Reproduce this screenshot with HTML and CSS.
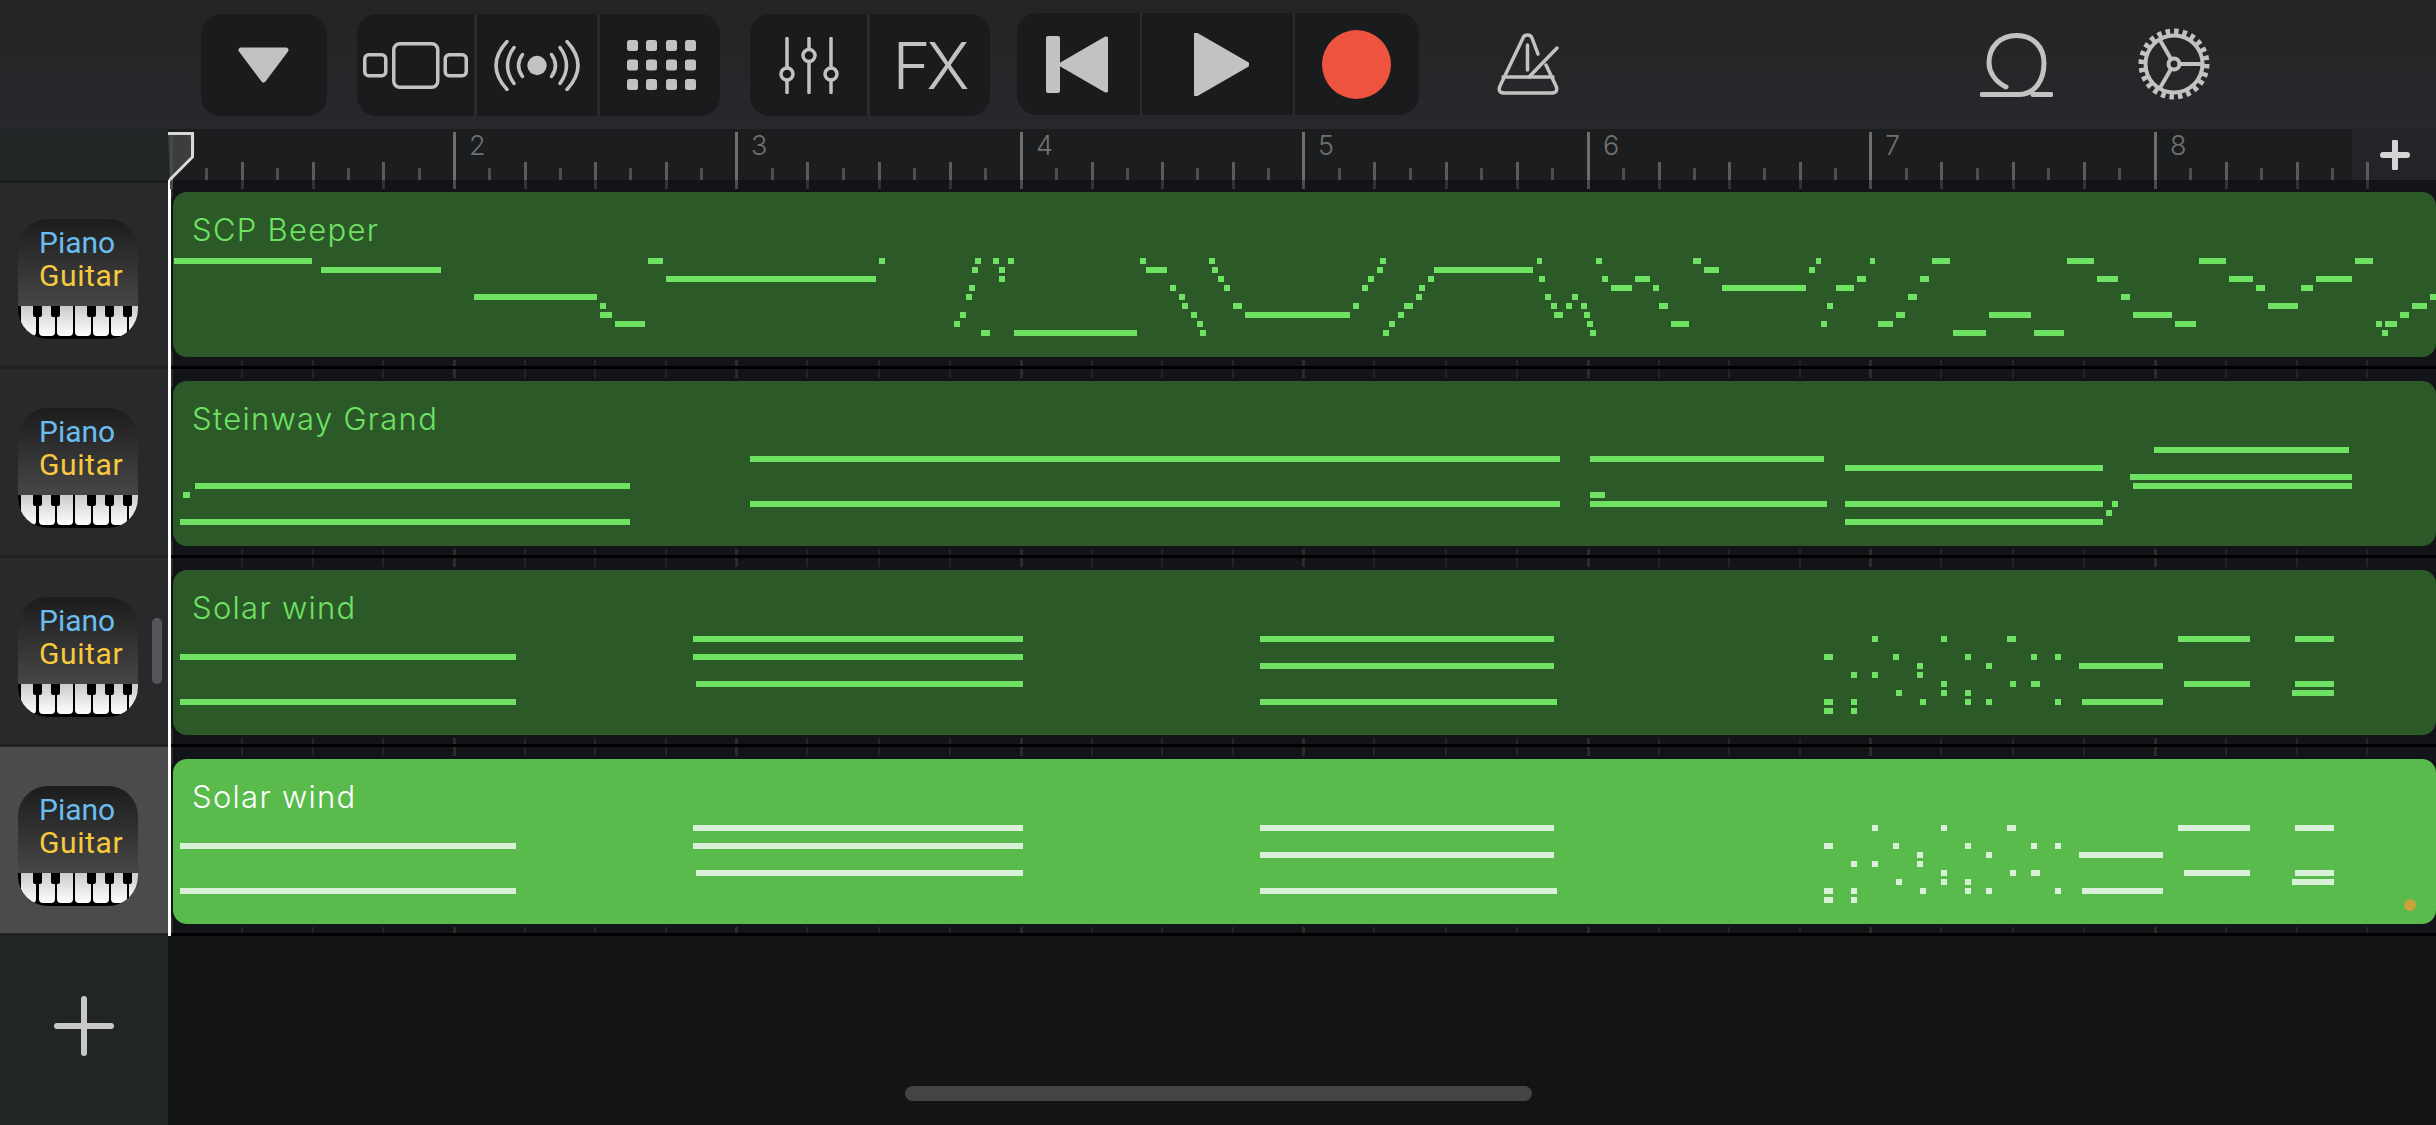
FILE: index.html
```html
<!DOCTYPE html>
<html>
    <head>
        <meta charset="utf-8" />
        <title>Tracks</title>
        <link rel="stylesheet" href="styles.css">
    </head>
    <body>
        <svg class="defs" width="0" height="0">
            <defs>
                <linearGradient id="keyShade" x1="0" y1="0" x2="0" y2="1">
                    <stop offset="0" stop-color="#cbcbcb" />
                    <stop offset="1" stop-color="#ffffff" />
                </linearGradient>
                <symbol id="keys" viewBox="0 0 120 33">
                    <rect width="120" height="33" fill="#000" />
                    <g fill="url(#keyShade)">
                        <path d="M3 0H18V26Q18 30 14 30H7Q3 30 3 26Z" />
                        <path d="M21 0H37V26Q37 30 33 30H25Q21 30 21 26Z" />
                        <path d="M39 0H55V26Q55 30 51 30H43Q39 30 39 26Z" />
                        <path d="M57 0H73V26Q73 30 69 30H61Q57 30 57 26Z" />
                        <path d="M75 0H91V26Q91 30 87 30H79Q75 30 75 26Z" />
                        <path d="M93 0H109V26Q109 30 105 30H97Q93 30 93 26Z" />
                        <path d="M111 0H120V30H111Z" />
                    </g>
                    <g fill="#000">
                        <path d="M15 0H24V9Q24 11 22 11H17Q15 11 15 9Z" />
                        <path d="M33 0H42V9Q42 11 40 11H35Q33 11 33 9Z" />
                        <path d="M69 0H78V9Q78 11 76 11H71Q69 11 69 9Z" />
                        <path d="M87 0H96V9Q96 11 94 11H89Q87 11 87 9Z" />
                        <path d="M105 0H114V9Q114 11 112 11H107Q105 11 105 9Z" />
                    </g>
                </symbol>
            </defs>
        </svg>

        <div class="app">
            <div class="toolbar">
                <div class="group group-view">
                    <div class="cell cell-view">
                        <svg class="icon" width="51" height="36" viewBox="0 0 51 36">
                            <path class="solid" d="M3 3H48L25.5 33Z" />
                        </svg>
                    </div>
                </div>

                <div class="group group-modes">
                    <div class="cell cell-a">
                        <svg class="icon" width="105" height="47" viewBox="0 0 105 47">
                            <g class="line">
                                <rect x="1.75" y="12.75" width="21" height="21" rx="4" />
                                <rect x="30.75" y="1.75" width="44" height="43.5" rx="6" />
                                <rect x="82.25" y="12.75" width="21" height="21" rx="4" />
                            </g>
                        </svg>
                    </div>
                    <div class="cell cell-b">
                        <svg class="icon" width="86" height="51" viewBox="0 0 86 51">
                            <circle class="fill" cx="43" cy="25.5" r="9.7" />
                            <g class="line">
                                <path d="M28.500 14.500Q20.500 25.500 28.500 36.500" />
                                <path d="M57.500 14.500Q65.500 25.500 57.500 36.500" />
                                <path d="M20 7.500Q7 25.500 20 43.500" />
                                <path d="M66 7.500Q79 25.500 66 43.500" />
                                <path d="M13 1.500Q-9 25.500 13 49.500" />
                                <path d="M73 1.500Q95 25.500 73 49.500" />
                            </g>
                        </svg>
                    </div>
                    <div class="cell cell-c">
                        <svg class="icon icon-grid" width="69" height="50" viewBox="0 0 69 50">
                            <g class="fill">
                                <rect x="0" y="0" width="11" height="11" rx="2.5" />
                                <rect x="19" y="0" width="11" height="11" rx="2.5" />
                                <rect x="39" y="0" width="11" height="11" rx="2.5" />
                                <rect x="58" y="0" width="11" height="11" rx="2.5" />
                                <rect x="0" y="19.5" width="11" height="11" rx="2.5" />
                                <rect x="19" y="19.5" width="11" height="11" rx="2.5" />
                                <rect x="39" y="19.5" width="11" height="11" rx="2.5" />
                                <rect x="58" y="19.5" width="11" height="11" rx="2.5" />
                                <rect x="0" y="39" width="11" height="11" rx="2.5" />
                                <rect x="19" y="39" width="11" height="11" rx="2.5" />
                                <rect x="39" y="39" width="11" height="11" rx="2.5" />
                                <rect x="58" y="39" width="11" height="11" rx="2.5" />
                            </g>
                        </svg>
                    </div>
                </div>

                <div class="group group-mix">
                    <div class="cell cell-a">
                        <svg class="icon" width="60" height="57" viewBox="0 0 60 57">
                            <g class="line">
                                <path d="M8 1.5V31M8 43V55.5" />
                                <path d="M30 1.5V12.5M30 24.500V55.5" />
                                <path d="M52 1.5V31M52 43V55.5" />
                                <circle cx="8" cy="37" r="6" />
                                <circle cx="30" cy="18.5" r="6" />
                                <circle cx="52" cy="37" r="6" />
                            </g>
                        </svg>
                    </div>
                    <div class="cell cell-c"><span class="fx">FX</span></div>
                </div>

                <div class="group group-transport">
                    <div class="cell cell-back">
                        <svg class="icon" width="62" height="57" viewBox="0 0 62 57">
                            <rect class="fill" x="0" y="0" width="14" height="57" rx="2" />
                            <path class="solid" d="M16 28.5L60 3V54Z" />
                        </svg>
                    </div>
                    <div class="cell cell-play">
                        <svg class="icon" width="55" height="63" viewBox="0 0 55 63">
                            <path class="solid" d="M2 2L53 31.5L2 61Z" />
                        </svg>
                    </div>
                    <div class="cell cell-rec"><span class="rec-dot"></span></div>
                </div>

                <svg class="icon tool-metronome" width="62" height="62" viewBox="0 0 62 62">
                    <g class="line">
                        <path d="M41 21L35 5C33.5 1 27.5 1 26 5L3 53C1 58 3 60 8 60H54C59 60 61 58 59 53L49 32" />
                        <path d="M6 44H56" />
                        <path d="M30.5 12V37" />
                        <path d="M32 44L60 15" />
                    </g>
                </svg>

                <svg class="icon tool-loop" width="73" height="64" viewBox="0 0 73 64">
                    <g class="line line-thick">
                        <path d="M26 54C14 48 9 38 9 30C9 13 21 2.5 36.500 2.500C52 2.500 64 13 64 30C64 46 56 61.500 38 61.500H2" />
                        <path d="M53 61.500H71" />
                    </g>
                </svg>

                <svg class="icon tool-gear" width="72" height="72" viewBox="0 0 72 72">
                    <g class="line">
                        <circle cx="36" cy="36" r="28.500" />
                        <circle cx="36" cy="36" r="5.500" />
                        <path d="M41.500 36H64.500M33 31L22 12M33 41L22 60" />
                    </g>
                    <circle class="teeth" cx="36" cy="36" r="32.500" />
                </svg>
            </div>

            <div class="head">
                <div class="corner"></div>
                <div class="ruler">
                    <svg id="rulerMarks" class="ruler-marks" width="2184" height="60"></svg>
                    <svg class="playhead-cap" width="27" height="49" viewBox="0 0 27 49">
                        <path d="M0 1.500H24.500V25L1.500 48" />
                    </svg>
                </div>
                <div class="ruler-add">
                    <svg width="30" height="30" viewBox="0 0 30 30">
                        <path d="M15 2V28M3 15H27" />
                    </svg>
                </div>
            </div>

            <div class="main">
                <div class="tracks">
                    <div class="track">
                        <div class="inst">
                            <span class="inst-piano">Piano</span>
                            <span class="inst-guitar">Guitar</span>
                            <svg class="inst-keys" width="120" height="33"><use href="#keys" /></svg>
                        </div>
                    </div>
                    <div class="track">
                        <div class="inst">
                            <span class="inst-piano">Piano</span>
                            <span class="inst-guitar">Guitar</span>
                            <svg class="inst-keys" width="120" height="33"><use href="#keys" /></svg>
                        </div>
                    </div>
                    <div class="track">
                        <div class="inst">
                            <span class="inst-piano">Piano</span>
                            <span class="inst-guitar">Guitar</span>
                            <svg class="inst-keys" width="120" height="33"><use href="#keys" /></svg>
                        </div>
                    </div>
                    <div class="track track-on">
                        <div class="inst">
                            <span class="inst-piano">Piano</span>
                            <span class="inst-guitar">Guitar</span>
                            <svg class="inst-keys" width="120" height="33"><use href="#keys" /></svg>
                        </div>
                    </div>
                    <div class="add-track">
                        <svg width="60" height="60" viewBox="0 0 60 60">
                            <path d="M30 3V57M3 30H57" />
                        </svg>
                    </div>
                    <div class="track-scroll"></div>
                </div>

                <div class="arrange">
                    <div class="lanes">
                        <svg id="laneGrid" class="lane-grid" width="2268" height="756"></svg>
                        <div class="lane">
                            <div class="clip" data-notes="beeper">
                                <span class="clip-name">SCP Beeper</span>
                            </div>
                        </div>
                        <div class="lane">
                            <div class="clip" data-notes="steinway">
                                <span class="clip-name">Steinway Grand</span>
                            </div>
                        </div>
                        <div class="lane">
                            <div class="clip" data-notes="solar">
                                <span class="clip-name">Solar wind</span>
                            </div>
                        </div>
                        <div class="lane">
                            <div class="clip clip-on" data-notes="solar">
                                <span class="clip-name">Solar wind</span>
                                <span class="clip-dot"></span>
                            </div>
                        </div>
                        <div class="playhead"></div>
                    </div>
                </div>
            </div>

            <div class="home-bar"></div>
        </div>

        <script src="app.js"></script>
    </body>
</html>
```

FILE: styles.css
```css
html {
    margin: 0px;
    padding: 0px;
}
body {
    font-family: 'Inter', 'Liberation Sans', sans-serif;
    margin: 0px;
    padding: 0px;
    background-color: #131514;
}
.defs {
    position: absolute;
}
.app {
    position: relative;
    display: flex;
    flex-direction: column;
    width: 2436px;
    height: 1125px;
    overflow: hidden;
    background-color: #131514;
}

/* toolbar */
.toolbar {
    display: flex;
    align-items: flex-start;
    height: 129px;
    padding-top: 14px;
    box-sizing: border-box;
    background: linear-gradient(#222425, #27282b);
}
.group {
    display: flex;
    height: 102px;
    border-radius: 20px;
    overflow: hidden;
    background-color: #1a1b1c;
}
.group-view {
    margin-left: 201px;
}
.group-modes {
    margin-left: 30px;
}
.group-mix {
    margin-left: 30px;
}
.group-transport {
    margin-left: 27px;
    margin-top: -1px;
}
.cell {
    display: flex;
    align-items: center;
    justify-content: center;
    height: 100%;
}
.cell + .cell {
    border-left: 3px solid #2a2b2c;
}
.cell-view {
    width: 126px;
    padding-right: 2px;
    box-sizing: border-box;
}
.cell-a {
    width: 117px;
}
.cell-b {
    width: 120px;
}
.cell-c {
    width: 120px;
}
.cell-back {
    width: 123px;
    padding-right: 3px;
    box-sizing: border-box;
}
.cell-play {
    width: 153px;
    padding-left: 8px;
    box-sizing: border-box;
}
.cell-rec {
    width: 126px;
    padding-right: 2px;
    box-sizing: border-box;
}
.group-transport .cell + .cell {
    border-left-width: 2px;
}
.icon-grid {
    margin-left: 3px;
}
.icon .line {
    fill: none;
    stroke: #c2c2c2;
    stroke-width: 3.5;
    stroke-linecap: round;
    stroke-linejoin: round;
}
.icon .line-thick {
    stroke-width: 5;
}
.icon .fill {
    fill: #c2c2c2;
}
.icon .solid {
    fill: #c2c2c2;
    stroke: #c2c2c2;
    stroke-width: 5;
    stroke-linejoin: round;
}
.icon .teeth {
    fill: none;
    stroke: #c2c2c2;
    stroke-width: 6;
    stroke-dasharray: 4.5 4;
}
.tool-gear .line {
    stroke-width: 4;
}
.fx {
    font-size: 65px;
    font-weight: 300;
    line-height: 1;
    letter-spacing: -4px;
    margin-right: 2px;
    color: #c2c2c2;
}
.rec-dot {
    width: 69px;
    height: 69px;
    border-radius: 50%;
    background-color: #ee5340;
}
.tool-metronome {
    margin-left: 78px;
    margin-top: 19px;
}
.tool-loop {
    margin-left: 421px;
    margin-top: 19px;
}
.tool-gear {
    margin-left: 85px;
    margin-top: 14px;
}

/* ruler */
.head {
    position: relative;
    z-index: 2;
    display: flex;
    height: 51px;
}
.corner {
    width: 168px;
    background-color: #232627;
}
.ruler {
    position: relative;
    width: 2184px;
    background-color: #1c1d1e;
}
.ruler-marks {
    display: block;
    overflow: visible;
}
.ruler-marks text {
    font-family: 'Inter', 'Liberation Sans', sans-serif;
    font-size: 27px;
    font-weight: 300;
    fill: #707171;
}
.playhead-cap {
    position: absolute;
    left: 0px;
    top: 3px;
}
.playhead-cap path {
    fill: rgba(66, 67, 69, 0.85);
    stroke: #d8d8d8;
    stroke-width: 3;
}
.ruler-add {
    display: flex;
    flex: 1;
    align-items: center;
    justify-content: center;
    padding-left: 2px;
    background-color: rgba(38, 39, 42, 0.85);
}
.ruler-add path {
    fill: none;
    stroke: #d4d4d4;
    stroke-width: 6;
    stroke-linecap: round;
}

/* track headers */
.main {
    display: flex;
    flex: 1;
}
.tracks {
    position: relative;
    display: flex;
    flex-direction: column;
    width: 168px;
    background-color: #222526;
}
.track {
    height: 189px;
    padding-top: 39px;
    padding-left: 18px;
    box-sizing: border-box;
    border-bottom: 3px solid #202122;
    background-color: #28292b;
}
.track:first-child {
    padding-top: 36px;
    border-top: 3px solid #1b1c1d;
}
.track-on {
    background-color: #4a4b4d;
}
.inst {
    position: relative;
    display: flex;
    flex-direction: column;
    width: 120px;
    height: 120px;
    padding-top: 7px;
    padding-left: 21px;
    box-sizing: border-box;
    border-radius: 30px;
    overflow: hidden;
    background: linear-gradient(#1c1c1d, #464646 72%);
    font-family: 'Roboto', 'Liberation Sans', sans-serif;
    font-size: 30px;
    font-weight: 400;
    line-height: 33px;
}
.inst-piano {
    color: #6bbdf0;
}
.inst-guitar {
    color: #f8c93d;
    letter-spacing: 0.6px;
}
.inst-keys {
    position: absolute;
    left: 0px;
    bottom: 0px;
}
.add-track {
    display: flex;
    justify-content: center;
    padding-top: 60px;
}
.add-track path {
    fill: none;
    stroke: #c8c8c8;
    stroke-width: 6;
    stroke-linecap: round;
}
.track-scroll {
    position: absolute;
    left: 152px;
    top: 438px;
    width: 10px;
    height: 66px;
    border-radius: 5px;
    background-color: #55565a;
}

/* clips */
.arrange {
    flex: 1;
}
.lanes {
    position: relative;
    height: 756px;
    background-color: #131417;
}
.lane-grid {
    position: absolute;
    left: 0px;
    top: 0px;
}
.lane {
    position: relative;
    height: 189px;
    padding-top: 12px;
    padding-left: 5px;
    box-sizing: border-box;
    border-bottom: 3px solid #000;
}
.clip {
    position: relative;
    height: 165px;
    padding-left: 19px;
    box-sizing: border-box;
    border-radius: 14px;
    background-color: #2b5a28;
    box-shadow: 0 0 0 3px #131417;
    color: #6fe264;
}
.clip-name {
    display: block;
    position: relative;
    padding-top: 18px;
    font-size: 31px;
    font-weight: 300;
    line-height: 40px;
    letter-spacing: 1.3px;
}
.clip-notes {
    position: absolute;
    left: 0px;
    top: 0px;
}
.clip-notes rect {
    fill: #6fe264;
}
.clip-on {
    background-color: #58bb4b;
    color: #ffffff;
}
.clip-on .clip-notes rect {
    fill: #d9f0d9;
}
.clip-dot {
    position: absolute;
    left: 2231px;
    top: 140px;
    width: 12px;
    height: 12px;
    border-radius: 50%;
    background-color: #c9a23b;
}
.playhead {
    position: absolute;
    left: 0px;
    top: 0px;
    width: 3px;
    height: 756px;
    background-color: #ffffff;
}
.home-bar {
    position: absolute;
    left: 905px;
    top: 1086px;
    width: 627px;
    height: 15px;
    border-radius: 8px;
    background-color: #434443;
}
```

FILE: app.js
```js
var SVG_NS = 'http://www.w3.org/2000/svg';
var BARS = [170, 453, 735, 1020, 1302, 1587, 1869, 2154];
var TICK = 35.4;
var RULER_LEFT = 168;
var CLIP_LEFT = 173;
var ROW_TOP = 66;
var ROW_STEP = 9;
var NOTE_HEIGHT = 6;

// note rows, top pitch first. each pair is [start, end] on the page
var NOTES = {
    beeper: [
        [[174, 312], [648, 663], [879, 885], [975, 981], [993, 999], [1008, 1014], [1140, 1146], [1209, 1215], [1380, 1386], [1537, 1542], [1596, 1602], [1693, 1701], [1816, 1821], [1870, 1875], [1932, 1950], [2067, 2094], [2199, 2226], [2355, 2373]],
        [[321, 441], [972, 978], [999, 1005], [1146, 1167], [1212, 1218], [1377, 1383], [1434, 1533], [1704, 1719], [1809, 1815]],
        [[666, 876], [999, 1005], [1218, 1224], [1368, 1374], [1428, 1434], [1539, 1545], [1602, 1608], [1635, 1650], [1857, 1866], [1920, 1929], [2097, 2118], [2229, 2253], [2316, 2352]],
        [[969, 975], [1170, 1176], [1224, 1230], [1362, 1368], [1419, 1425], [1611, 1632], [1653, 1659], [1722, 1806], [1836, 1854], [2256, 2265], [2301, 2313]],
        [[474, 597], [966, 972], [1179, 1185], [1416, 1422], [1545, 1551], [1572, 1578], [1908, 1917], [2121, 2130], [2430, 2436]],
        [[600, 606], [1182, 1188], [1233, 1242], [1353, 1359], [1404, 1413], [1551, 1557], [1566, 1572], [1581, 1587], [1659, 1668], [1827, 1833], [2268, 2298], [2412, 2427]],
        [[600, 612], [960, 966], [1191, 1197], [1245, 1350], [1398, 1404], [1554, 1563], [1584, 1590], [1896, 1905], [1989, 2031], [2133, 2172], [2400, 2409]],
        [[615, 645], [954, 960], [1197, 1203], [1389, 1395], [1587, 1593], [1671, 1689], [1821, 1827], [1878, 1893], [2175, 2196], [2376, 2382], [2385, 2397]],
        [[981, 990], [1014, 1137], [1200, 1206], [1383, 1389], [1590, 1596], [1953, 1986], [2034, 2064], [2382, 2388]]
    ],
    steinway: [
        [[2154, 2349]],
        [[750, 1560], [1590, 1824]],
        [[1845, 2103]],
        [[2130, 2352]],
        [[195, 630], [2133, 2352]],
        [[183, 190], [1590, 1605]],
        [[750, 1560], [1590, 1827], [1845, 2103], [2112, 2118]],
        [[2106, 2112]],
        [[180, 630], [1845, 2103]]
    ],
    solar: [
        [[693, 1023], [1260, 1554], [1872, 1878], [1941, 1947], [2007, 2016], [2178, 2250], [2295, 2334]],
        [],
        [[180, 516], [693, 1023], [1824, 1833], [1893, 1899], [1965, 1971], [2031, 2037], [2055, 2061]],
        [[1260, 1554], [1917, 1923], [1986, 1992], [2079, 2163]],
        [[1851, 1857], [1872, 1878], [1917, 1923]],
        [[696, 1023], [1941, 1947], [2010, 2016], [2031, 2040], [2184, 2250], [2295, 2334]],
        [[1896, 1902], [1941, 1947], [1965, 1971], [2292, 2334]],
        [[180, 516], [1260, 1557], [1824, 1833], [1851, 1857], [1920, 1926], [1965, 1971], [1986, 1992], [2055, 2061], [2082, 2163]],
        [[1824, 1833], [1851, 1857]]
    ]
};

function addRect(svg, x, y, width, height, color) {
    var rect = document.createElementNS(SVG_NS, 'rect');
    rect.setAttribute('x', x);
    rect.setAttribute('y', y);
    rect.setAttribute('width', width);
    rect.setAttribute('height', height);
    if (color) {
        rect.setAttribute('fill', color);
    }
    svg.appendChild(rect);
}

// ticks are eighths of a bar, bars are not quite evenly spaced
function tickX(i) {
    var bar = Math.floor(i / 8);
    var x;
    if (bar < BARS.length - 1) {
        x = BARS[bar] + ((BARS[bar + 1] - BARS[bar]) * (i % 8)) / 8;
    } else {
        x = BARS[BARS.length - 1] + TICK * (i - (BARS.length - 1) * 8);
    }
    return Math.round(x) - RULER_LEFT;
}

function drawRuler() {
    var svg = document.getElementById('rulerMarks');
    for (var i = 0; i <= 62; i++) {
        var x = tickX(i);
        if (i % 8 === 0) {
            addRect(svg, x, 3, 3, 48, '#6d6e6e');
            addRect(svg, x, 51, 3, 9, '#4a4b4b');

            var label = document.createElementNS(SVG_NS, 'text');
            label.setAttribute('x', x + 16);
            label.setAttribute('y', 26);
            label.textContent = i / 8 + 1;
            svg.appendChild(label);
        } else if (i % 2 === 0) {
            addRect(svg, x, 33, 3, 18, '#5a5b5c');
            addRect(svg, x, 51, 3, 9, '#323334');
        } else {
            addRect(svg, x, 39, 3, 12, '#4c4d4e');
        }
    }
}

function drawGrid() {
    var svg = document.getElementById('laneGrid');
    for (var i = 0; i <= 64; i += 2) {
        if (i % 8 === 0) {
            addRect(svg, tickX(i), 0, 3, 756, '#2b2c2e');
        } else {
            addRect(svg, tickX(i), 0, 2, 756, '#232426');
        }
    }
}

function drawClips() {
    var clips = document.querySelectorAll('.clip');
    for (var i = 0; i < clips.length; i++) {
        var rows = NOTES[clips[i].getAttribute('data-notes')];
        var svg = document.createElementNS(SVG_NS, 'svg');
        svg.setAttribute('class', 'clip-notes');
        svg.setAttribute('width', 2263);
        svg.setAttribute('height', 165);

        rows.forEach(function(row, r) {
            row.forEach(function(note) {
                addRect(svg, note[0] - CLIP_LEFT, ROW_TOP + r * ROW_STEP, note[1] - note[0], NOTE_HEIGHT);
            });
        });
        clips[i].appendChild(svg);
    }
}

drawRuler();
drawGrid();
drawClips();
```
